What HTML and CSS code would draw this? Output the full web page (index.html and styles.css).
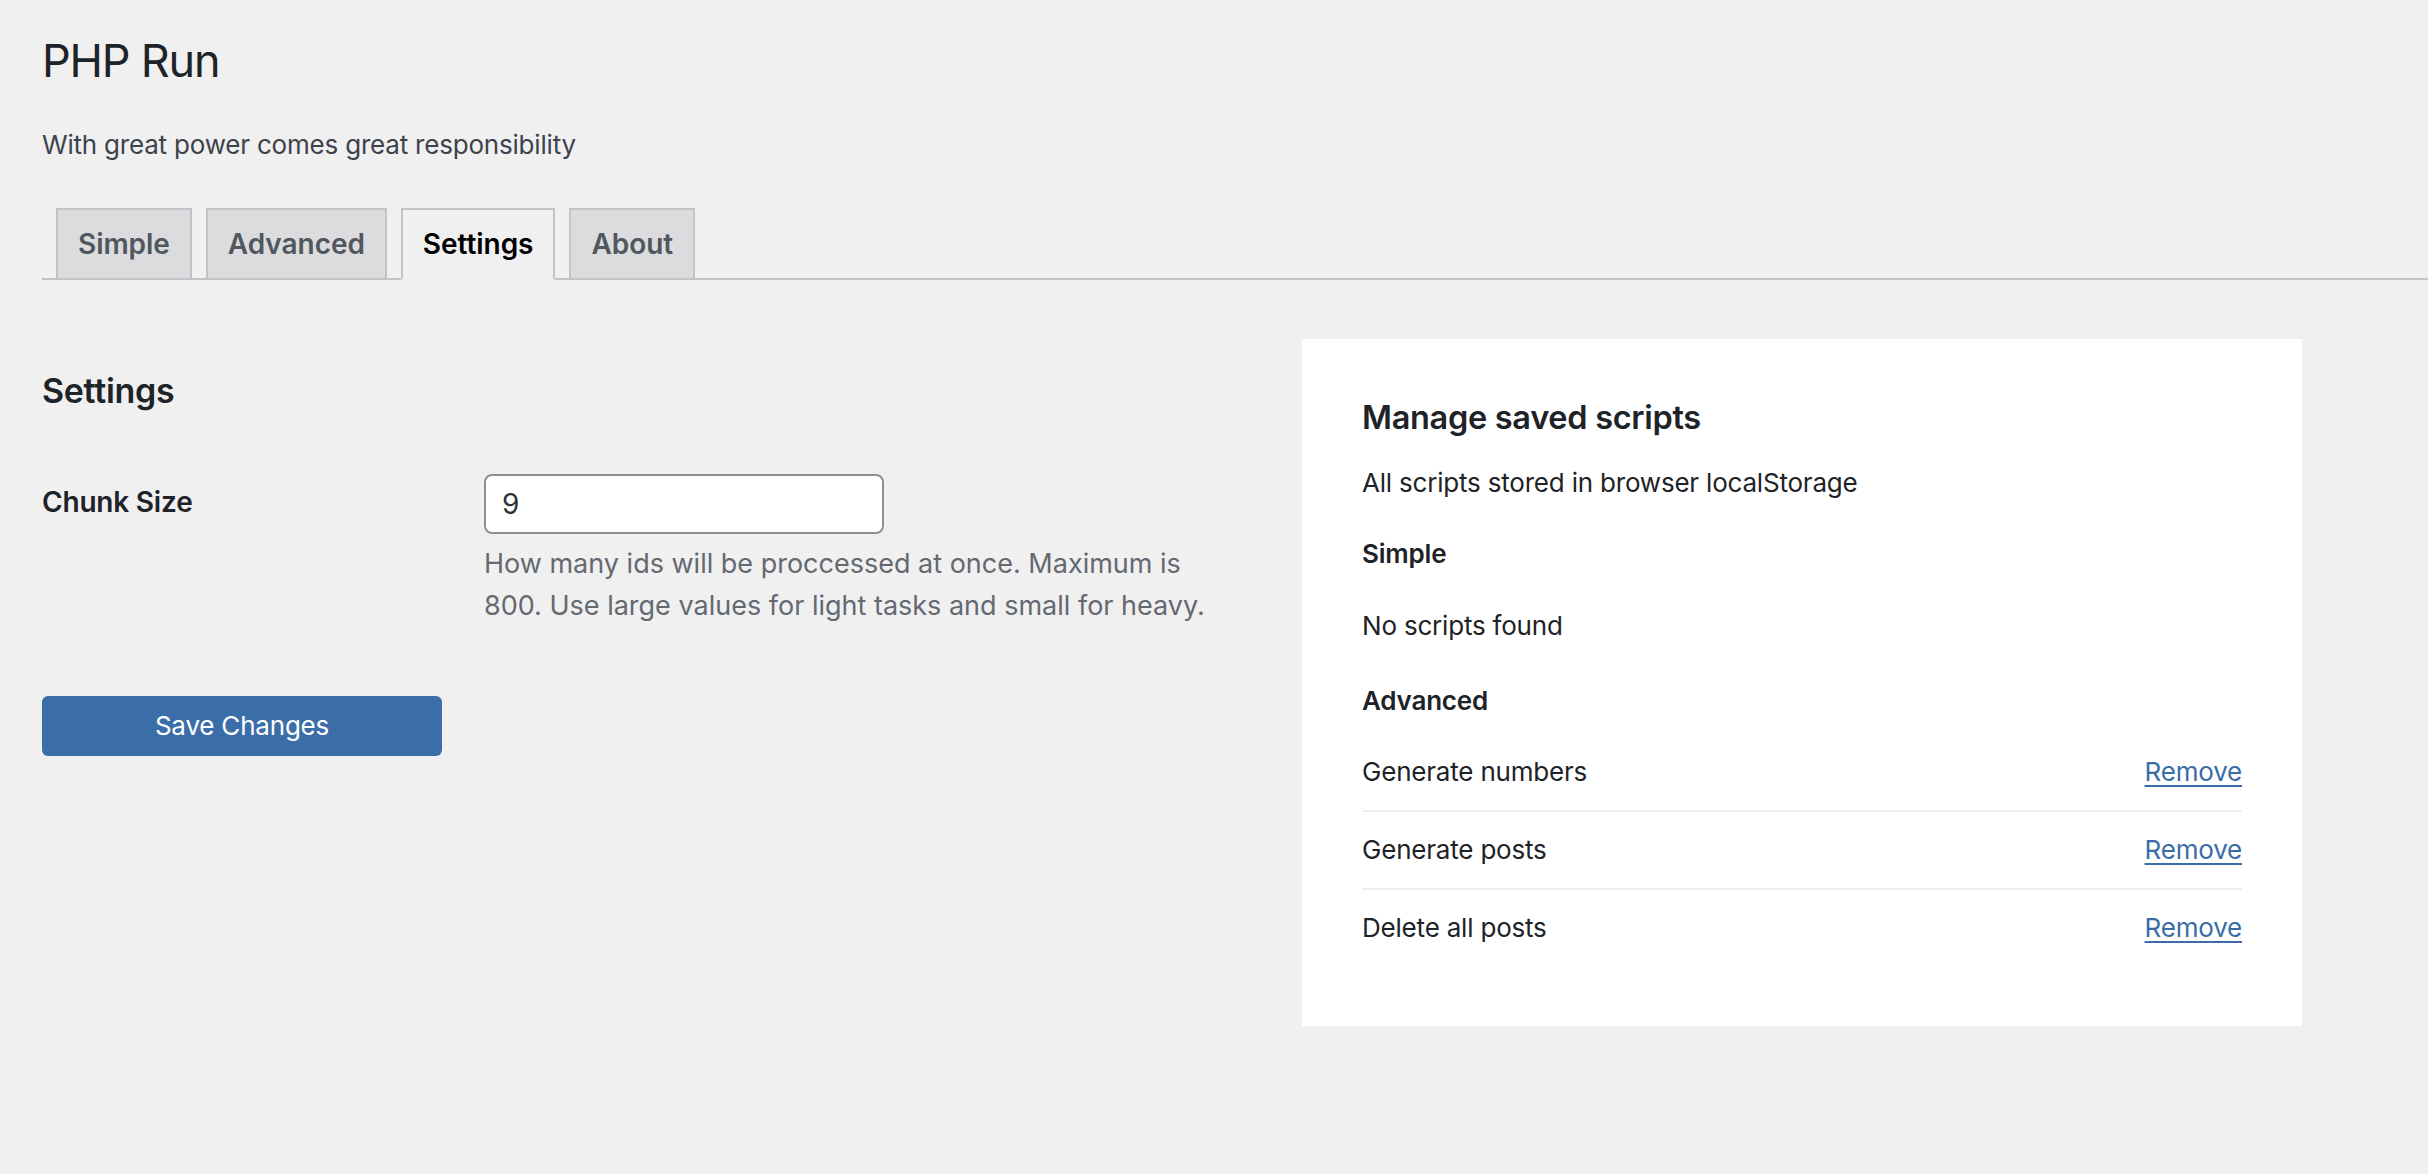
FILE: index.html
```html
<!DOCTYPE html>
<html lang="en">
<head>
<meta charset="utf-8">
<title>PHP Run</title>
<link rel="stylesheet" href="styles.css">
</head>
<body>
<div class="wrap">
  <h1 class="page-title">PHP Run</h1>
  <p class="subtitle">With great power comes great responsibility</p>
  <nav class="nav-tab-wrapper">
    <a class="nav-tab" href="#">Simple</a>
    <a class="nav-tab" href="#">Advanced</a>
    <a class="nav-tab nav-tab-active" href="#">Settings</a>
    <a class="nav-tab" href="#">About</a>
  </nav>
  <div class="content">
    <form class="settings-col">
      <h2 class="section-title">Settings</h2>
      <div class="form-row">
        <label class="form-label" for="chunk">Chunk Size</label>
        <div class="form-field">
          <input id="chunk" class="text-input" type="text" value="9">
          <p class="description">How many ids will be proccessed at once. Maximum is 800. Use large values for light tasks and small for heavy.</p>
        </div>
      </div>
      <button class="button-primary" type="button">Save Changes</button>
    </form>
    <section class="panel">
      <h2 class="panel-title">Manage saved scripts</h2>
      <p class="panel-note">All scripts stored in browser localStorage</p>
      <h4 class="group-title first">Simple</h4>
      <p class="empty">No scripts found</p>
      <h4 class="group-title">Advanced</h4>
      <ul class="script-list">
        <li class="script-row"><span>Generate numbers</span><a class="remove" href="#">Remove</a></li>
        <li class="script-row"><span>Generate posts</span><a class="remove" href="#">Remove</a></li>
        <li class="script-row"><span>Delete all posts</span><a class="remove" href="#">Remove</a></li>
      </ul>
    </section>
  </div>
</div>
</body>
</html>
```

FILE: styles.css
```css
* { box-sizing: border-box; }
html, body {
  margin: 0;
  padding: 0;
  background: #f0f0f1;
}
body {
  font-family: Inter, "Noto Sans", "Liberation Sans", sans-serif;
  color: #1d2327;
  font-size: 26px;
  line-height: 36px;
  letter-spacing: -0.2px;
}
.wrap {
  padding: 31px 0 0 42px;
}
.page-title {
  margin: 0;
  font-size: 45px;
  font-weight: 400;
  line-height: 60px;
  letter-spacing: -1.2px;
  color: #1d2327;
}
.subtitle {
  margin: 34px 0 0;
  font-size: 26px;
  line-height: 39px;
  color: #3c434a;
}
.nav-tab-wrapper {
  margin-top: 44px;
  display: flex;
  border-bottom: 2px solid #c3c4c7;
}
.nav-tab {
  margin-left: 14px;
  margin-bottom: -2px;
  padding: 10px 20px;
  border: 2px solid #c3c4c7;
  background: #dcdcde;
  color: #50575e;
  font-size: 28px;
  font-weight: 600;
  line-height: 48px;
  letter-spacing: -0.05px;
  text-decoration: none;
}
.nav-tab-active {
  background: #f0f0f1;
  color: #000;
  border-bottom-color: #f0f0f1;
}
.content {
  display: flex;
  align-items: flex-start;
  margin-top: 59px;
}
.settings-col {
  width: 1218px;
  flex: none;
}
.section-title {
  margin: 30px 0 0;
  font-size: 34px;
  font-weight: 600;
  line-height: 44px;
  letter-spacing: -0.3px;
}
.form-row {
  display: flex;
  margin-top: 61px;
}
.form-label {
  width: 442px;
  flex: none;
  padding-top: 10px;
  font-size: 28px;
  font-weight: 600;
  line-height: 36px;
}
.form-field {
  width: 740px;
}
.text-input {
  display: block;
  width: 400px;
  height: 60px;
  margin: 0;
  padding: 0 16px;
  border: 2px solid #8c8f94;
  border-radius: 8px;
  background: #fff;
  font-family: inherit;
  font-size: 28px;
  color: #2c3338;
}
.description {
  margin: 9px 0 0;
  font-size: 27px;
  line-height: 42px;
  letter-spacing: 0;
  color: #646970;
}
.button-primary {
  display: block;
  margin-top: 69px;
  width: 400px;
  height: 60px;
  border: 0;
  border-radius: 6px;
  background: #3b6ea9;
  color: #fff;
  font-family: inherit;
  font-size: 26px;
  line-height: 60px;
  letter-spacing: -0.2px;
  padding: 0;
}
.panel {
  width: 1000px;
  flex: none;
  margin-left: 42px;
  background: #fff;
  padding: 57px 60px 60px;
}
.panel-title {
  margin: 0;
  font-size: 32.5px;
  font-weight: 600;
  line-height: 44px;
  letter-spacing: -0.3px;
}
.panel-note {
  margin: 25px 0 0;
}
.group-title {
  margin: 39px 0 0;
  font-size: 26px;
  font-weight: 600;
  line-height: 36px;
}
.group-title.first {
  margin-top: 35px;
}
.empty {
  margin: 36px 0 0;
}
.script-list {
  list-style: none;
  margin: 15px 0 0;
  padding: 0;
}
.script-row {
  display: flex;
  justify-content: space-between;
  padding: 20px 0;
  border-bottom: 2px solid #f0f0f1;
}
.script-row:last-child {
  border-bottom: 0;
}
.remove {
  color: #3a6ca8;
  text-decoration: underline;
  text-decoration-thickness: 2px;
  text-underline-offset: 4px;
}
```
